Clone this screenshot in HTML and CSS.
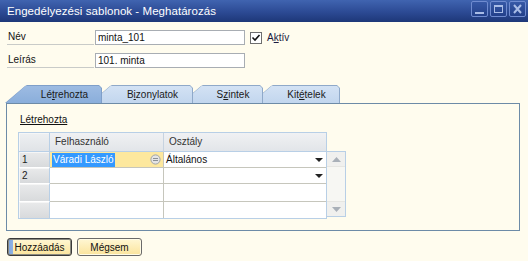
FILE: index.html
```html
<!DOCTYPE html>
<html lang="hu">
<head>
<meta charset="utf-8">
<link rel="stylesheet" href="styles.css">
</head>
<body>
<div class="window">
  <div class="titlebar">
    <span class="title">Engedélyezési sablonok - Meghatározás</span>
    <div class="wbtns">
      <span class="wbtn"><svg width="15" height="14" viewBox="0 0 15 14"><rect x="3" y="10" width="9" height="2" fill="#a9bce6"/></svg></span>
      <span class="wbtn"><svg width="15" height="14" viewBox="0 0 15 14"><rect x="3.5" y="3.5" width="8" height="7" fill="none" stroke="#a9bce6" stroke-width="1"/><rect x="3" y="3" width="9" height="2" fill="#a9bce6"/></svg></span>
      <span class="wbtn"><svg width="15" height="14" viewBox="0 0 15 14"><path d="M4 3 L11 11 M11 3 L4 11" stroke="#a9bce6" stroke-width="2"/></svg></span>
    </div>
  </div>

  <div class="content">
    <div class="field-row">
      <span class="lbl">Név</span>
      <span class="input">minta_101</span>
      <span class="check"><svg width="10" height="10" viewBox="0 0 10 10"><path d="M1.5 4.5 L4 7 L8.5 2" fill="none" stroke="#111" stroke-width="1.6"/></svg></span>
      <span class="chk-label">A<u>k</u>tív</span>
    </div>
    <div class="field-row second">
      <span class="lbl">Leírás</span>
      <span class="input">101. minta</span>
    </div>

    <div class="tabs">
      <div class="tab active t1"><span>Lé<u>t</u>rehozta</span></div>
      <div class="tab t2"><span>B<u>i</u>zonylatok</span></div>
      <div class="tab t3"><span>S<u>z</u>intek</span></div>
      <div class="tab t4"><span>Kit<u>é</u>telek</span></div>
    </div>

    <div class="panel">
      <div class="section-title">Létrehozta</div>
      <div class="grid-wrap">
        <div class="grid">
          <div class="rh head"></div>
          <div class="hc">Felhasználó</div>
          <div class="hc last">Osztály</div>

          <div class="rh">1</div>
          <div class="dc sel"><span class="hl">Váradi László</span><svg class="lnk" width="11" height="11" viewBox="0 0 11 11"><circle cx="5.5" cy="5.5" r="4.6" fill="#e4e4e4" stroke="#9ea3a8" stroke-width="1"/><path d="M3 4.5 H8 M3 6.5 H8" stroke="#8a9096" stroke-width="1"/></svg></div>
          <div class="dc last"><span>Általános</span><svg class="dd" width="8" height="4" viewBox="0 0 8 4"><path d="M0 0 H8 L4 4 Z" fill="#222"/></svg></div>

          <div class="rh">2</div>
          <div class="dc"></div>
          <div class="dc last"><span></span><svg class="dd" width="8" height="4" viewBox="0 0 8 4"><path d="M0 0 H8 L4 4 Z" fill="#222"/></svg></div>

          <div class="rh"></div>
          <div class="dc"></div>
          <div class="dc last"></div>

          <div class="rh bottom"></div>
          <div class="dc bottom"></div>
          <div class="dc last bottom"></div>
        </div>
        <div class="scrollbar">
          <div class="sb-btn"><svg width="9" height="5" viewBox="0 0 9 5"><path d="M0 5 L4.5 0 L9 5 Z" fill="#a9b0b8"/></svg></div>
          <div class="sb-track"></div>
          <div class="sb-btn"><svg width="9" height="5" viewBox="0 0 9 5"><path d="M0 0 L4.5 5 L9 0 Z" fill="#a9b0b8"/></svg></div>
        </div>
      </div>
    </div>

    <div class="buttons">
      <div class="btn primary">Hozzáadás</div>
      <div class="btn">Mégsem</div>
    </div>
  </div>
</div>
</body>
</html>
```

FILE: styles.css
```css
* { box-sizing: border-box; }
html, body { margin: 0; padding: 0; }
body {
  width: 528px;
  height: 261px;
  overflow: hidden;
  background: #fffcee;
  font-family: "Liberation Sans", Arial, sans-serif;
  font-size: 10px;
  color: #111;
}
.window { width: 528px; height: 261px; }

.titlebar {
  height: 22px;
  background: linear-gradient(#4064b0, #2c4a94 55%, #1d3778);
  display: flex;
  align-items: flex-start;
  justify-content: space-between;
  padding-left: 7px;
  padding-right: 2px;
}
.title {
  color: #fff;
  font-size: 11.5px;
  line-height: 22px;
  letter-spacing: 0.05px;
}
.wbtns { display: flex; gap: 2px; padding-top: 1px; }
.wbtn {
  width: 17px;
  height: 16px;
  border: 1px solid #6f8bd0;
  border-radius: 2px;
  background: linear-gradient(#3658a6, #23408a);
  display: flex;
  align-items: center;
  justify-content: center;
}

.content { padding-top: 8px; }

.field-row {
  display: flex;
  align-items: center;
  height: 15px;
  padding-left: 7px;
}
.field-row.second { margin-top: 8px; }
.lbl {
  width: 87px;
  height: 15px;
  line-height: 14px;
  padding-left: 1px;
  border-bottom: 1px solid #c9cbc8;
}
.input {
  margin-left: 1px;
  width: 150px;
  height: 15px;
  line-height: 13px;
  padding-left: 2px;
  border: 1px solid #a8adb3;
  background: #fff;
}
.check {
  margin-left: 5px;
  width: 12px;
  height: 12px;
  border: 1px solid #6e6e6e;
  background: #fff;
  display: flex;
  align-items: center;
  justify-content: center;
}
.chk-label { margin-left: 5px; color: #1a1a40; }

.tabs {
  margin-top: 17px;
  height: 18px;
  display: flex;
  padding-left: 5px;
}
.tab {
  position: relative;
  height: 18px;
  background: #8fa9c9;
  clip-path: polygon(0 100%, 20px 1px, 22px 0, calc(100% - 3px) 0, 100% 3px, 100% 100%);
  padding-left: 22px;
  display: flex;
  align-items: center;
  justify-content: center;
  color: #1a1a1a;
}
.tab::before {
  content: "";
  position: absolute;
  inset: 1px 1px 0 1px;
  clip-path: polygon(0 100%, 19.5px 0, calc(100% - 2px) 0, 100% 2px, 100% 100%);
  background: linear-gradient(#d3e2f4, #c2d6ee);
}
.tab span { position: relative; line-height: 17px; }
.tab.active { background: #7f9fc9; }
.tab.active::before { background: linear-gradient(#9dbbe2, #8aaedb); }
.t1 { width: 97px; z-index: 4; }
.t2 { width: 103px; margin-left: -12px; z-index: 3; }
.t3 { width: 82px; margin-left: -12px; z-index: 2; }
.t4 { width: 89px; margin-left: -12px; z-index: 1; }

.panel {
  margin-left: 6px;
  width: 514px;
  height: 128px;
  border: 1px solid #6d8ba7;
  padding: 9px 0 0 11px;
}
.section-title {
  height: 13px;
  line-height: 13px;
  padding-left: 2px;
  text-decoration: underline;
  color: #111;
}
.grid-wrap {
  margin-top: 6px;
  display: flex;
  align-items: flex-start;
}
.grid {
  display: grid;
  grid-template-columns: 31px 114px 162px;
  grid-template-rows: 19px 16px 16px 18px 16px;
  border: 1px solid #b8cfe6;
  background: #fff;
}
.rh {
  background: linear-gradient(#e9eaeb, #d8dadc);
  border-right: 1px solid #b8cfe6;
  border-bottom: 1px solid #fff;
  box-shadow: inset 1px 1px 0 #f6f6f6;
  padding-left: 3px;
  line-height: 16px;
  color: #222;
}
.rh.head {
  background: linear-gradient(#eef0f2, #e0e3e7);
  border-bottom: 1px solid #b8cfe6;
}
.rh.bottom { border-bottom: none; }
.hc {
  background: linear-gradient(#f0f1f3, #e2e5e9);
  border-right: 1px solid #c7d3e0;
  border-bottom: 1px solid #b8cfe6;
  padding-left: 5px;
  line-height: 18px;
  color: #333;
}
.hc.last { border-right: none; }
.dc {
  border-right: 1px solid #c6c6bc;
  border-bottom: 1px solid #c6c6bc;
  display: flex;
  align-items: center;
  justify-content: space-between;
  padding-left: 2px;
  padding-right: 2px;
}
.dc.last { border-right: none; padding-right: 3px; }
.dc.bottom { border-bottom: none; }
.dc.sel { background: #fde89e; }
.hl {
  background: #3399ff;
  color: #fff;
  line-height: 14px;
  padding: 0 1px;
}
.lnk { display: block; }
.dd { display: block; }

.scrollbar {
  margin-top: 19px;
  width: 19px;
  height: 66px;
  border: 1px solid #b8cfe6;
  border-left: none;
  background: #f7f7f3;
  display: flex;
  flex-direction: column;
}
.sb-btn {
  height: 14px;
  background: #f0f0ee;
  display: flex;
  align-items: center;
  justify-content: center;
}
.sb-track { flex: 1; border-top: 1px solid #e6e6e2; border-bottom: 1px solid #e6e6e2; }

.buttons {
  margin-top: 7px;
  padding-left: 7px;
  display: flex;
  gap: 5px;
}
.btn {
  width: 65px;
  height: 18px;
  border: 1px solid #6a6a6a;
  border-radius: 3px;
  background: linear-gradient(#fff7d4, #fbe49c);
  box-shadow: inset 0 0 0 1px #fffbe6;
  display: flex;
  align-items: center;
  justify-content: center;
  color: #111;
}
.btn.primary {
  border: 1px solid #3a3a3a;
  box-shadow: inset 0 0 0 1px #8a8a80;
  background: linear-gradient(to right, #7ea5de 0, #8fb2e4 5px, transparent 5px), linear-gradient(#fff7d4, #fbe49c);
}
```
